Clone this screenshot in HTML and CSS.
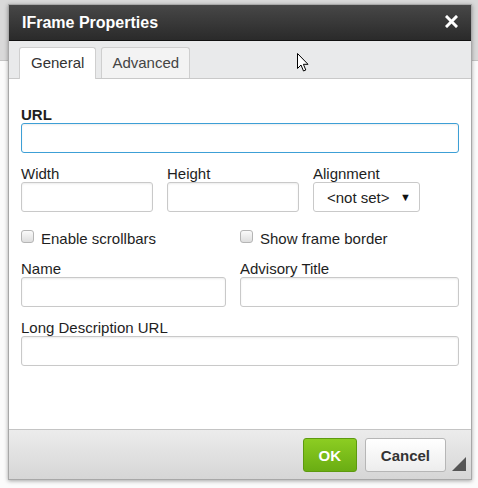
FILE: index.html
```html
<!DOCTYPE html>
<html lang="en">
<head>
  <meta charset="UTF-8" />
  <title>IFrame Properties</title>
  <link rel="stylesheet" href="styles.css">
</head>
<body>
  <div class="editor">
    <div class="toolbar"></div>
    <div class="page"></div>
  </div>

  <div class="dialog">
    <div class="titlebar">
      <span class="title">IFrame Properties</span>
      <svg class="close" width="13" height="13" viewBox="0 0 13 13">
        <path d="M2 2 L11 11 M11 2 L2 11" stroke="#fff" stroke-width="3" stroke-linecap="square" />
      </svg>
    </div>

    <div class="tabs">
      <div class="tab active">General</div>
      <div class="tab">Advanced</div>
    </div>

    <div class="content">
      <div class="field">
        <label class="strong">URL</label>
        <input type="text" class="focus" />
      </div>

      <div class="row three">
        <div class="field">
          <label>Width</label>
          <input type="text" />
        </div>
        <div class="field">
          <label>Height</label>
          <input type="text" />
        </div>
        <div class="field">
          <label>Alignment</label>
          <div class="select"><span>&lt;not set&gt;</span><span class="arrow">&#9660;</span></div>
        </div>
      </div>

      <div class="row two checks">
        <div class="check"><span class="box"></span>Enable scrollbars</div>
        <div class="check"><span class="box"></span>Show frame border</div>
      </div>

      <div class="row two">
        <div class="field">
          <label>Name</label>
          <input type="text" class="short" />
        </div>
        <div class="field">
          <label>Advisory Title</label>
          <input type="text" />
        </div>
      </div>

      <div class="field">
        <label>Long Description URL</label>
        <input type="text" />
      </div>
    </div>

    <div class="footer">
      <button class="btn ok">OK</button>
      <button class="btn">Cancel</button>
      <span class="resize"></span>
    </div>
  </div>

  <!-- mouse pointer -->
  <svg class="cursor" width="12" height="19" viewBox="0 0 12 19">
    <path d="M0.5 0.5 L0.5 15.5 L4 12 L6.5 18 L8.8 17 L6.4 11.3 L11 11.3 Z" fill="#fff" stroke="#000" stroke-width="1" />
  </svg>
</body>
</html>
```

FILE: styles.css
```css
body {
  margin: 0;
  font-family: "Liberation Sans", Arial, sans-serif;
  font-size: 15px;
  color: #222;
  background: #fff;
  width: 478px;
  height: 488px;
  overflow: hidden;
  position: relative;
}
.toolbar {
  height: 60px;
  background: #d9d9d9;
  border-bottom: 1px solid #c4c4c4;
}
.page { height: 427px; background: #fbfbfb; }

.dialog {
  position: absolute;
  left: 8px;
  top: 4px;
  width: 462px;
  height: 474px;
  border: 1px solid #a8a8a8;
  background: #fff;
  box-shadow: 0 1px 4px rgba(0, 0, 0, 0.35);
  display: flex;
  flex-direction: column;
}
.titlebar {
  height: 36px;
  background: linear-gradient(#474747, #2a2a2a);
  border-bottom: 1px solid #111;
  display: flex;
  align-items: center;
  justify-content: space-between;
  padding: 0 13px 0 13px;
  box-sizing: border-box;
}
.title {
  color: #fff;
  font-size: 16px;
  font-weight: bold;
}
.close { margin-top: -3px; }

.tabs {
  height: 38px;
  background: #e9eaeb;
  border-bottom: 1px solid #c9c9c9;
  box-sizing: border-box;
  display: flex;
  align-items: flex-end;
  padding-left: 10px;
  gap: 5px;
}
.tab {
  height: 30px;
  line-height: 30px;
  padding: 0 10px;
  color: #444;
  background: #f3f3f3;
  border: 1px solid #cfcfcf;
  border-bottom: none;
  border-radius: 3px 3px 0 0;
}
.tab.active {
  background: #fff;
  height: 31px;
  margin-bottom: -1px;
  padding: 0 11px;
  color: #333;
}

.content {
  flex: 1;
  padding: 27px 12px 0 12px;
  display: flex;
  flex-direction: column;
  gap: 12px;
}
.field { display: flex; flex-direction: column; }
.field label {
  line-height: 17px;
  color: #1e1e1e;
}
.field label.strong { font-weight: bold; }
input {
  height: 30px;
  box-sizing: border-box;
  border: 1px solid #c9c9c9;
  border-radius: 3px;
  box-shadow: inset 0 1px 2px rgba(0, 0, 0, 0.08);
  margin: 0;
  font: inherit;
}
input.focus { border-color: #3d9fd6; }
input.short { margin-right: 14px; }

.row.three {
  display: grid;
  grid-template-columns: 132px 132px 107px;
  gap: 14px;
}
.row.two {
  display: grid;
  grid-template-columns: 219px 1fr;
}
.checks {
  margin-top: 3px;
  margin-bottom: -1px;
  height: 22px;
  align-items: center;
}
.check {
  display: flex;
  align-items: center;
  color: #1e1e1e;
}
.box {
  width: 11px;
  height: 11px;
  border: 1px solid #b5b5b5;
  border-radius: 3px;
  background: linear-gradient(#fafafa, #dedede);
  margin-right: 7px;
  margin-top: -3px;
}
.select {
  height: 30px;
  box-sizing: border-box;
  border: 1px solid #c9c9c9;
  border-radius: 3px;
  display: flex;
  align-items: center;
  justify-content: space-between;
  padding: 0 8px 0 13px;
  background: #fff;
}
.arrow { font-size: 11px; color: #111; }

.footer {
  height: 50px;
  box-sizing: border-box;
  border-top: 1px solid #c4c4c4;
  background: linear-gradient(#ececec, #d6d6d6);
  display: flex;
  justify-content: flex-end;
  align-items: flex-start;
  padding: 8px 25px 0 0;
  gap: 8px;
  position: relative;
}
.btn {
  height: 34px;
  border-radius: 3px;
  font-family: inherit;
  font-size: 15px;
  font-weight: bold;
  padding: 0 15px;
  border: 1px solid #b6b6b6;
  background: linear-gradient(#ffffff, #ededed);
  color: #333;
}
.btn.ok {
  width: 54px;
  padding: 0;
  color: #fff;
  border-color: #5d9a0f;
  background: linear-gradient(#8ccd22, #6aad13);
}
.resize {
  position: absolute;
  right: 5px;
  bottom: 8px;
  width: 0;
  height: 0;
  border-left: 14px solid transparent;
  border-bottom: 14px solid #555;
}
.cursor {
  position: absolute;
  left: 297px;
  top: 53px;
}
```
